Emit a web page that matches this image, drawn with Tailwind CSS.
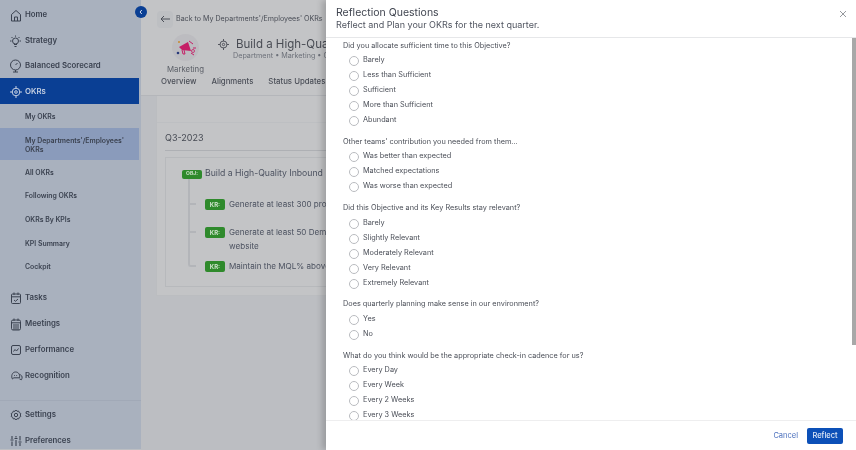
<!DOCTYPE html>
<html><head><meta charset="utf-8"><script src="https://cdn.jsdelivr.net/npm/@tailwindcss/browser@4"></script></head>
<body class="w-[856px] h-[450px] overflow-hidden bg-[#bcbec2] font-['Inter','Liberation_Sans',sans-serif]">
<div class="flex h-[450px] w-[856px] overflow-hidden">
  <!-- Sidebar -->
  <aside class="relative z-10 w-[141px] h-[449px] shrink-0 bg-[#a9b1be] text-[#3b4250] font-semibold blur-[0.35px]">
    <div class="absolute left-[135px] top-[6px] w-3 h-3 rounded-full bg-[#0a3f94] flex items-center justify-center z-10"><svg width="6" height="6" viewBox="0 0 6 6" fill="none" stroke="#d5dff0" stroke-width="1"><path d="M3.800 1 2 3l1.800 2"/></svg></div>
    <div class="h-[78px] flex flex-col text-[7.800px]">
      <div class="h-[28px] pt-[2px] flex items-center gap-[3px] pl-[10px]"><svg width="12" height="13" viewBox="0 0 12 13" fill="none" stroke="#3b4250" stroke-width="1"><path d="M1.500 12V5.500L6 1.500l4.500 4V12zM4.500 12V8h3v4"/></svg>Home</div>
      <div class="h-[24px] pt-[2px] flex items-center gap-[3px] pl-[9px]"><svg width="13" height="13" viewBox="0 0 13 13" fill="none" stroke="#3b4250" stroke-width="1"><circle cx="6.500" cy="6" r="3"/><path d="M5 9.500h3M5.500 11.500h2M6.500 .5v1.200M1 6h1.500M10.500 6H12M2.500 2l1 1M10.500 2l-1 1"/></svg>Strategy</div>
      <div class="h-[26px] pt-[2px] flex items-center gap-[3px] pl-[9px]"><svg width="13" height="14" viewBox="0 0 13 14" fill="none" stroke="#3b4250" stroke-width="1"><circle cx="6.500" cy="6" r="5"/><path d="M6.500 6l2-2M4 13h5M6.500 11v2"/></svg>Balanced Scorecard</div>
    </div>
    <div class="w-[139px] h-[26px] pt-[1px] bg-[#0a3f94] text-[#c6d0e2] text-[7.800px] flex items-center gap-[3px] pl-[10px]"><svg width="12" height="12" viewBox="0 0 12 12" fill="none" stroke="#c6d0e2" stroke-width="1"><circle cx="6" cy="6" r="3.800"/><circle cx="6" cy="6" r="1.300"/><path d="M6 0v2.500M6 9.500V12M0 6h2.500M9.500 6H12"/></svg>OKRs</div>
    <div class="w-[139px] text-[6.900px]">
      <div class="h-6 pt-[2px] flex items-center pl-[25px]">My OKRs</div>
      <div class="h-[32px] pt-[1px] flex items-center pl-[25px] bg-[#8a9bbb] leading-[9px]"><span>My Departments'/Employees'<br>OKRs</span></div>
      <div class="h-6 pt-[2px] flex items-center pl-[25px]">All OKRs</div>
      <div class="h-[23px] pt-[2px] flex items-center pl-[25px]">Following OKRs</div>
      <div class="h-6 pt-[2px] flex items-center pl-[25px]">OKRs By KPIs</div>
      <div class="h-6 pt-[2px] flex items-center pl-[25px]">KPI Summary</div>
      <div class="h-[23px] pt-[2px] flex items-center pl-[25px]">Cockpit</div>
    </div>
    <div class="mt-[6px] text-[7.800px]">
      <div class="h-[26px] pt-[2px] flex items-center gap-[3px] pl-[10px]"><svg width="12" height="13" viewBox="0 0 12 13" fill="none" stroke="#3b4250" stroke-width="1"><rect x="1.500" y="2" width="9" height="9.500" rx="1"/><path d="M1.500 4.800h9M4 .5v2.500M8 .5v2.500M4 8l1.500 1.300L8 7"/></svg>Tasks</div>
      <div class="h-[26px] pt-[2px] flex items-center gap-[3px] pl-[10px]"><svg width="12" height="13" viewBox="0 0 12 13" fill="none" stroke="#3b4250" stroke-width="1"><rect x="1.500" y="2" width="9" height="10" rx="1.500"/><path d="M1.500 4.800h9M4 .5v2.500M8 .5v2.500M3 7h6M3 9h6M3 11h6"/></svg>Meetings</div>
      <div class="h-[26px] pt-[2px] flex items-center gap-[3px] pl-[10px]"><svg width="12" height="12" viewBox="0 0 12 12" fill="none" stroke="#3b4250" stroke-width="1"><rect x="1.500" y="1.500" width="9" height="9" rx="1.500"/><path d="M3.500 7.500 5 5.500l1.500 1.500 2-2.500"/></svg>Performance</div>
      <div class="h-[26px] pt-[2px] flex items-center gap-[2px] pl-[10px]"><svg width="13" height="12" viewBox="0 0 13 12" fill="none" stroke="#3b4250" stroke-width="1"><path d="M2.500 9C.8 6.500 2 2 5.500 2S10 5 9.500 7.800H3.800zM9.500 4.500c2 .4 3 2 2.500 3.800l-.5 1.400-2-.7"/><path d="M4 5.500h.8M6.300 5.500h.8"/></svg>Recognition</div>
    </div>
    <div class="mt-[12px] border-t border-[#a1a9b7] text-[7.800px]">
      <div class="h-[26px] pt-[2px] flex items-center gap-[3px] pl-[10px]"><svg width="12" height="12" viewBox="0 0 12 12" fill="none" stroke="#3b4250" stroke-width="1"><path d="M6 1l1 1.300 1.700-.2.600 1.600 1.500.8-.5 1.500.5 1.500-1.500.8-.6 1.600-1.700-.2L6 11 5 9.700l-1.700.2-.6-1.600-1.500-.8.500-1.500-.5-1.500 1.500-.8.600-1.600 1.700.2z"/><circle cx="6" cy="6" r="1.700"/></svg>Settings</div>
      <div class="h-[26px] pt-[2px] flex items-center gap-[3px] pl-[10px]"><svg width="12" height="12" viewBox="0 0 12 12" fill="none" stroke="#3b4250" stroke-width="1.100"><path d="M2 1v3M2 6.500V11M6 1v1.500M6 5v6M10 1v4.500M10 8v3M.5 5h3M4.500 3.500h3M8.500 7h3"/></svg>Preferences</div>
    </div>
  </aside>

  <!-- Main (dimmed) -->
  <main class="relative w-[185px] h-[450px] shrink-0 overflow-hidden text-[#4a4e57] blur-[0.35px]">
    <div class="relative h-[96px] w-[400px] border-b border-[#b4b6ba] bg-[#c3c4c6]">
      <div class="flex items-center h-[37px] pl-[16px] pt-[1px]">
        <div class="w-[16px] h-[17px] bg-[#bdbfc2] rounded-sm flex items-center justify-center"><svg width="11" height="8" viewBox="0 0 11 8" fill="none" stroke="#4a4e57" stroke-width="1"><path d="M10 4H1M4 1 1 4l3 3"/></svg></div>
        <span class="ml-[3px] text-[7.100px] whitespace-nowrap">Back to My Departments'/Employees' OKRs</span>
        <span class="ml-[3px] w-px h-[12px] bg-[#a5a7ab]"></span>
      </div>
      <div class="flex h-[27px] pl-[31px]">
        <div class="w-[27px] h-[27px] -mt-[3px] rounded-full bg-[#bcbcc0] flex items-center justify-center">
          <svg width="24" height="24" viewBox="0 0 24 24" fill="none"><path d="M5 11l9-5 3 9-9-1z" fill="#c51f66"/><path d="M8 14l1 4h2l-1-4M15 5l4 3M19 12h3M17 17l3 2" stroke="#c51f66" stroke-width="1"/><circle cx="19" cy="15" r="1.500" stroke="#c51f66" stroke-width=".8"/><circle cx="5" cy="6" r="1" fill="#c98a2e"/><circle cx="4" cy="17" r="1.300" fill="#283a7a"/></svg>
        </div>
        <div class="ml-[19px] -mt-[2px]">
          <div class="flex items-center gap-[7px] text-[11.500px] leading-[18px] whitespace-nowrap text-[#494c54]"><svg width="11" height="11" viewBox="0 0 12 12" fill="none" stroke="#494c54" stroke-width="1"><circle cx="6" cy="6" r="3.800"/><circle cx="6" cy="6" r="1.300"/><path d="M6 0v2.500M6 9.500V12M0 6h2.500M9.500 6H12"/></svg>Build a High-Quality Inbound</div>
          <div class="text-[7.200px] leading-[8px] ml-[15px] -mt-px text-[#6c7079] whitespace-nowrap">Department • Marketing • Q3</div>
        </div>
      </div>
      <div class="pl-[26px] text-[7.800px] leading-[10px] text-[#5a5e66]">Marketing</div>
      <div class="flex gap-[15px] pl-[20px] mt-[1px] text-[7.800px] font-medium whitespace-nowrap leading-[12px]"><span>Overview</span><span>Alignments</span><span>Status Updates</span></div>
    </div>
    <div class="ml-[15px] w-[400px] h-[200px] bg-[#c3c4c6] border-x border-b border-[#bbbdc0]">
      <div class="h-[27px] border-b border-[#bdbfc2]"></div>
      <div class="pl-[8px] pt-[8px] pr-[15px]">
        <div class="h-[20px] text-[9px] leading-[13px] border-b border-[#aeb0b4] text-[#454952]">Q3-2023</div>
        <div class="mt-[6px] h-[130px] border border-[#b7b9bc] pl-[16px] pt-[11px] text-[8.100px] relative whitespace-nowrap text-[#4c5260]">
          <div class="absolute left-[22px] top-[21px] w-[8px] h-[88px] border-l-2 border-b-2 rounded-bl-[3px] border-[#b3b5b9]"></div>
          <div class="absolute left-[23px] top-[45px] w-[7px] h-[2px] bg-[#b3b5b9]"></div>
          <div class="absolute left-[23px] top-[73px] w-[7px] h-[2px] bg-[#b3b5b9]"></div>
          <div class="flex items-center gap-[3px] h-[10px]"><span class="w-[20px] h-[9px] rounded-[2px] bg-[#2f8a2c] text-[#cfe2cc] text-[5px] font-bold flex items-center justify-center">OBJ:</span><span class="text-[8.700px]">Build a High-Quality Inbound Lead</span></div>
          <div class="ml-[23px] mt-[20px] flex items-center gap-[4px] h-[11px]"><span class="w-[20px] h-[11px] rounded-[2px] bg-[#2f8a2c] text-[#cfe2cc] text-[6px] font-bold flex items-center justify-center">KR:</span><span>Generate at least 300 product</span></div>
          <div class="ml-[23px] mt-[17px] flex items-center gap-[4px] h-[11px]"><span class="w-[20px] h-[11px] rounded-[2px] bg-[#2f8a2c] text-[#cfe2cc] text-[6px] font-bold flex items-center justify-center">KR:</span><span>Generate at least 50 Demo</span></div>
          <div class="ml-[47px] mt-[2px] leading-[12px]">website</div>
          <div class="ml-[23px] mt-[9px] flex items-center gap-[4px] h-[11px]"><span class="w-[20px] h-[11px] rounded-[2px] bg-[#2f8a2c] text-[#cfe2cc] text-[6px] font-bold flex items-center justify-center">KR:</span><span>Maintain the MQL% above</span></div>
        </div>
      </div>
    </div>
  </main>

  <!-- Panel -->
  <section class="relative z-20 w-[530px] h-[450px] shrink-0 bg-white flex flex-col shadow-[-4px_0_6px_rgba(0,0,0,0.18)] text-[#4b4f58]">
    <header class="h-[38px] shrink-0 border-b border-[#e6e7e9] pl-[10px] pt-[7px] relative">
      <div class="text-[10.500px] leading-[12px] text-[#404550] blur-[0.25px]">Reflection Questions</div>
      <div class="text-[9px] leading-[12px] text-[#505560] blur-[0.25px]">Reflect and Plan your OKRs for the next quarter.</div>
      <svg class="absolute left-[514px] top-[11px]" width="6" height="6" viewBox="0 0 6 6" stroke="#8a8d93" stroke-width="0.900"><path d="M0 0l6 6M6 0 0 6"/></svg>
    </header>
    <div class="flex-1 relative overflow-hidden pl-[17px] pt-[1px] text-[7.300px] blur-[0.25px]">
      <div class="absolute right-0 top-0 w-[4px] h-[307px] bg-[#a8a8a8]"></div>
      <div>
        <div class="h-[14px] flex items-center">Did you allocate sufficient time to this Objective?</div>
        <div class="h-[15px] flex items-center gap-[4px] pl-[6px]"><span class="w-[10px] h-[10px] rounded-full border border-[#b9bbbf] mt-[1px]"></span>Barely</div>
        <div class="h-[15px] flex items-center gap-[4px] pl-[6px]"><span class="w-[10px] h-[10px] rounded-full border border-[#b9bbbf] mt-[1px]"></span>Less than Sufficient</div>
        <div class="h-[15px] flex items-center gap-[4px] pl-[6px]"><span class="w-[10px] h-[10px] rounded-full border border-[#b9bbbf] mt-[1px]"></span>Sufficient</div>
        <div class="h-[15px] flex items-center gap-[4px] pl-[6px]"><span class="w-[10px] h-[10px] rounded-full border border-[#b9bbbf] mt-[1px]"></span>More than Sufficient</div>
        <div class="h-[15px] flex items-center gap-[4px] pl-[6px]"><span class="w-[10px] h-[10px] rounded-full border border-[#b9bbbf] mt-[1px]"></span>Abundant</div>
      </div>
      <div class="pt-[7px]">
        <div class="h-[14px] flex items-center">Other teams' contribution you needed from them...</div>
        <div class="h-[15px] flex items-center gap-[4px] pl-[6px]"><span class="w-[10px] h-[10px] rounded-full border border-[#b9bbbf] mt-[1px]"></span>Was better than expected</div>
        <div class="h-[15px] flex items-center gap-[4px] pl-[6px]"><span class="w-[10px] h-[10px] rounded-full border border-[#b9bbbf] mt-[1px]"></span>Matched expectations</div>
        <div class="h-[15px] flex items-center gap-[4px] pl-[6px]"><span class="w-[10px] h-[10px] rounded-full border border-[#b9bbbf] mt-[1px]"></span>Was worse than expected</div>
      </div>
      <div class="pt-[7px]">
        <div class="h-[15px] flex items-center">Did this Objective and its Key Results stay relevant?</div>
        <div class="h-[15px] flex items-center gap-[4px] pl-[6px]"><span class="w-[10px] h-[10px] rounded-full border border-[#b9bbbf] mt-[1px]"></span>Barely</div>
        <div class="h-[15px] flex items-center gap-[4px] pl-[6px]"><span class="w-[10px] h-[10px] rounded-full border border-[#b9bbbf] mt-[1px]"></span>Slightly Relevant</div>
        <div class="h-[15px] flex items-center gap-[4px] pl-[6px]"><span class="w-[10px] h-[10px] rounded-full border border-[#b9bbbf] mt-[1px]"></span>Moderately Relevant</div>
        <div class="h-[15px] flex items-center gap-[4px] pl-[6px]"><span class="w-[10px] h-[10px] rounded-full border border-[#b9bbbf] mt-[1px]"></span>Very Relevant</div>
        <div class="h-[15px] flex items-center gap-[4px] pl-[6px]"><span class="w-[10px] h-[10px] rounded-full border border-[#b9bbbf] mt-[1px]"></span>Extremely Relevant</div>
      </div>
      <div class="pt-[6px]">
        <div class="h-[15px] flex items-center">Does quarterly planning make sense in our environment?</div>
        <div class="h-[15px] flex items-center gap-[4px] pl-[6px]"><span class="w-[10px] h-[10px] rounded-full border border-[#b9bbbf] mt-[1px]"></span>Yes</div>
        <div class="h-[15px] flex items-center gap-[4px] pl-[6px]"><span class="w-[10px] h-[10px] rounded-full border border-[#b9bbbf] mt-[1px]"></span>No</div>
      </div>
      <div class="pt-[7px]">
        <div class="h-[14px] flex items-center">What do you think would be the appropriate check-in cadence for us?</div>
        <div class="h-[15px] flex items-center gap-[4px] pl-[6px]"><span class="w-[10px] h-[10px] rounded-full border border-[#b9bbbf] mt-[1px]"></span>Every Day</div>
        <div class="h-[15px] flex items-center gap-[4px] pl-[6px]"><span class="w-[10px] h-[10px] rounded-full border border-[#b9bbbf] mt-[1px]"></span>Every Week</div>
        <div class="h-[15px] flex items-center gap-[4px] pl-[6px]"><span class="w-[10px] h-[10px] rounded-full border border-[#b9bbbf] mt-[1px]"></span>Every 2 Weeks</div>
        <div class="h-[15px] flex items-center gap-[4px] pl-[6px]"><span class="w-[10px] h-[10px] rounded-full border border-[#b9bbbf] mt-[1px]"></span>Every 3 Weeks</div>
      </div>
    </div>
    <footer class="h-[30px] shrink-0 border-t border-[#eeeeef] flex items-center justify-end gap-[9px] pr-[13px] text-[7.500px] blur-[0.25px]">
      <span class="text-[#4a6fbd]">Cancel</span>
      <span class="w-[36px] h-[16px] rounded-[2px] bg-[#0c50b8] text-[#dfe8f6] font-medium flex items-center justify-center">Reflect</span>
    </footer>
  </section>
</div>
</body></html>
